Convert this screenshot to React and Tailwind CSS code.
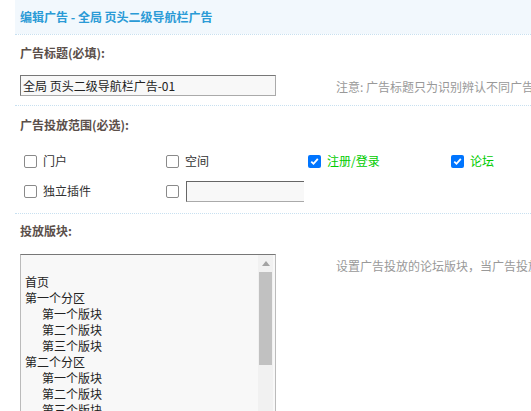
import React from "react";

const font = "font-['SimSun','Noto_Sans_CJK_SC',sans-serif]";

const forums = [
  { name: "", indent: false },
  { name: "首页", indent: false },
  { name: "第一个分区", indent: false },
  { name: "第一个版块", indent: true },
  { name: "第二个版块", indent: true },
  { name: "第三个版块", indent: true },
  { name: "第二个分区", indent: false },
  { name: "第一个版块", indent: true },
  { name: "第二个版块", indent: true },
  { name: "第三个版块", indent: true },
];

const Check = ({ checked }) =>
  checked ? (
    <span className="block w-[13px] h-[13px] rounded-[2px] bg-[#0075ff] flex items-center justify-center shrink-0">
      <svg width="9" height="9" viewBox="0 0 9 9">
        <path d="M1.3 4.6 L3.5 6.8 L7.8 1.8" fill="none" stroke="#fff" strokeWidth="1.8" />
      </svg>
    </span>
  ) : (
    <span className="block w-[13px] h-[13px] rounded-[2px] border border-[#8a8a8a] bg-white shrink-0" />
  );

const Option = ({ label, checked, green }) => (
  <label className="flex items-center h-[20px]">
    <span className="ml-[4px] flex">
      <Check checked={checked} />
    </span>
    <span className={`ml-[6px] ${green ? "text-[#00cc00]" : "text-[#333]"}`}>{label}</span>
  </label>
);

const Divider = () => <div className="ml-[15px] border-t border-dotted border-[#c8e0f0]" />;

const App = () => {
  return (
    <div className={`w-[531px] h-[411px] overflow-hidden bg-white text-[12px] leading-[16px] ${font}`}>
      <div className="ml-[15px] h-[34px] bg-[#f2f8fd] flex items-center pl-[5px]">
        <h1 className="font-bold text-[#2b9bd6]">编辑广告 - 全局 页头二级导航栏广告</h1>
      </div>
      <Divider />

      <div className="pl-[20px] pt-[10px] h-[70px]">
        <div className="font-bold text-[#5b4f4a]">广告标题(必填):</div>
        <div className="flex items-center mt-[14px]">
          <div className="w-[256px] h-[21px] border border-[#aaa] border-t-[#777] border-l-[#777] bg-[#f8f8f8] flex items-center pl-[2px] text-[#222] shrink-0">
            全局 页头二级导航栏广告-01
          </div>
          <div className="ml-[60px] mt-[2px] whitespace-nowrap text-[#999]">注意: 广告标题只为识别辨认不同广告条目之用</div>
        </div>
      </div>
      <Divider />

      <div className="pl-[20px] pt-[11px] h-[107px]">
        <div className="font-bold text-[#5b4f4a]">广告投放范围(必选):</div>
        <div className="mt-[18px] grid grid-cols-[142px_142px_143px_100px]">
          <Option label="门户" />
          <Option label="空间" />
          <Option label="注册/登录" checked green />
          <Option label="论坛" checked green />
        </div>
        <div className="mt-[10px] grid grid-cols-[142px_180px]">
          <Option label="独立插件" />
          <div className="flex items-center h-[20px]">
            <span className="ml-[4px] flex">
              <Check />
            </span>
            <div className="ml-[7px] w-[118px] h-[21px] border border-[#aaa] border-t-[#666] border-l-[#666] border-r-0 bg-[#f8f8f8]" />
          </div>
        </div>
      </div>
      <Divider />

      <div className="pl-[20px] pt-[9px]">
        <div className="font-bold text-[#5b4f4a]">投放版块:</div>
        <div className="flex mt-[15px]">
          <div className="w-[256px] h-[170px] border border-[#bbb] border-t-[#777] bg-[#f8f8f8] flex shrink-0">
            <ul className="flex-1 pt-[3px] pl-[4px] text-[#222]">
              {forums.map((f, i) => (
                <li key={i} className={`h-[16px] whitespace-nowrap ${f.indent ? "pl-[17px]" : ""}`}>
                  {f.name}
                </li>
              ))}
            </ul>
            <div className="w-[15px] mr-[2px] bg-[#f1f1f1] flex flex-col items-center">
              <div className="h-[17px] flex items-center justify-center">
                <svg width="8" height="5" viewBox="0 0 8 5">
                  <path d="M0 5 L4 0 L8 5 Z" fill="#a3a3a3" />
                </svg>
              </div>
              <div className="w-[13px] h-[93px] bg-[#c1c1c1]" />
              <div className="flex-1" />
              <div className="h-[17px] flex items-center justify-center">
                <svg width="8" height="5" viewBox="0 0 8 5">
                  <path d="M0 0 L8 0 L4 5 Z" fill="#505050" />
                </svg>
              </div>
            </div>
          </div>
          <div className="ml-[60px] mt-[4px] whitespace-nowrap text-[#999]">
            设置广告投放的论坛版块，当广告投放范围中包含“论坛”时有效
          </div>
        </div>
      </div>
    </div>
  );
};

export default App;
